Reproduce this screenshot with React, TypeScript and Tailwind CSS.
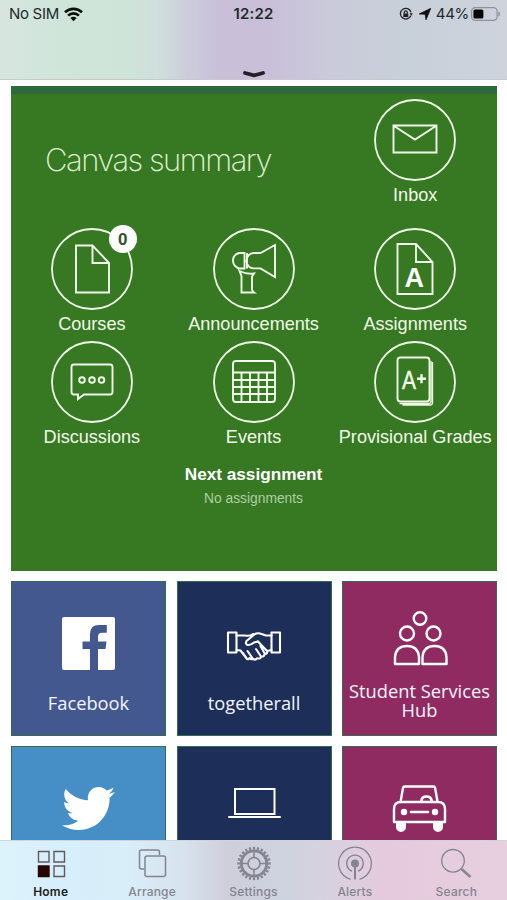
import React from "react";
import { FaTwitter } from "react-icons/fa";

type IconProps = { children: React.ReactNode };

function Circle({ children }: IconProps) {
  return (
    <svg width="82" height="82" viewBox="0 0 82 82" fill="none" stroke="#f1fbe9" strokeWidth="1.9" className="block">
      <circle cx="41" cy="41" r="40" strokeWidth="1.8" />
      {children}
    </svg>
  );
}

function Shortcut({ label, badge, children }: { label: string; badge?: string; children: React.ReactNode }) {
  return (
    <div className="flex w-[161.700px] shrink-0 flex-col items-center">
      <div className="relative">
        <Circle>{children}</Circle>
        {badge && (
          <span className="absolute -top-[3px] left-[58px] flex h-[28px] w-[28px] items-center justify-center rounded-full bg-white text-[17px] leading-none font-bold text-[#36502c]">
            {badge}
          </span>
        )}
      </div>
      <span className="mt-[4px] text-[18.100px] leading-[21px] whitespace-nowrap text-[#f1fbe9]">{label}</span>
    </div>
  );
}

function Tile({ color, label, children }: { color: string; label?: string; children: React.ReactNode }) {
  return (
    <div className={`flex h-[155px] w-[155px] flex-col items-center border border-[#356b50] ${color}`}>
      {children}
      {label && (
        <span className="flex h-[38px] w-[150px] items-center justify-center text-center font-['Open_Sans',sans-serif] text-[18.3px] leading-[19px] text-[#f5f5ff]">
          {label}
        </span>
      )}
    </div>
  );
}

function TileIcon({ children }: IconProps) {
  return (
    <svg width="60" height="101" viewBox="0 0 60 101" fill="none" stroke="#fff" strokeWidth="2.4" strokeLinejoin="round" strokeLinecap="round" className="block shrink-0">
      {children}
    </svg>
  );
}

function Tab({ label, active, children }: { label: string; active?: boolean; children: React.ReactNode }) {
  return (
    <div className={`flex flex-1 flex-col items-center ${active ? "text-[#241c20]" : "text-[#858490]"}`}>
      <svg width="40" height="42" viewBox="0 0 40 42" fill="none" stroke="currentColor" strokeWidth="1.5" className="block">
        {children}
      </svg>
      <span className={`text-[12px] leading-[13px] tracking-[0.200px] ${active ? "font-semibold" : "font-medium"}`}>{label}</span>
    </div>
  );
}

const teeth = Array.from({ length: 24 }, (_, i) => i * 15);

export default function App() {
  return (
    <div className="flex h-[900px] w-[507px] flex-col overflow-hidden bg-white font-['Liberation_Sans',Arial,sans-serif]">
      <header className="flex h-[80px] shrink-0 flex-col justify-between border-b border-[#c6c9cf] bg-[linear-gradient(90deg,#d6e6df_0%,#cfe5da_12%,#cee4d9_25%,#cfdfdb_31%,#cccddc_37%,#c9bfd9_43%,#c9bfd9_53%,#cacada_65%,#c8d0d9_80%,#ced3dc_100%)]">
        <div className="grid h-[28px] grid-cols-3 items-center font-[Inter,sans-serif] text-[15px] text-[#222a2b]">
          <div className="flex items-center gap-[5px] pl-[9px]">
            <span className="tracking-[-0.300px]">No SIM</span>
            <svg width="19" height="15" viewBox="0 0 19 15" fill="none" stroke="#0b0f0e" strokeWidth="2.7">
              <path d="M1 5.3a12.2 12.2 0 0 1 17 0" />
              <path d="M4.1 8.6a7.8 7.8 0 0 1 10.8 0" />
              <path d="M6.4 11.1a4.4 4.4 0 0 1 6.2 0L9.5 14.300z" fill="#0b0f0e" stroke="none" />
            </svg>
          </div>
          <span className="text-center text-[15px] font-semibold tracking-[0.200px]">12:22</span>
          <div className="flex items-center justify-end pr-[6px]">
            <svg width="14" height="14" viewBox="0 0 14 14" fill="none" stroke="#222" strokeWidth="1.3" className="mr-[6px]">
              <path d="M11.8 8.8A5.4 5.4 0 1 1 12 5.2" />
              <path d="m10.6 6.2 3.2 0-1.6 2.8z" fill="#222" stroke="none" />
              <rect x="4.3" y="6.4" width="5" height="3.7" fill="#222" stroke="none" />
              <path d="M5.3 6.5V5.4a1.5 1.5 0 0 1 3 0v1.1" />
            </svg>
            <svg width="12" height="12" viewBox="0 0 12 12" className="mr-[5px]">
              <path d="M11.800.3 7 11.800 6.200 6.200.2 6z" fill="#111" stroke="#111" strokeWidth=".8" strokeLinejoin="round" />
            </svg>
            <span className="text-[15px] tracking-[-0.300px]">44%</span>
            <svg width="30" height="14" viewBox="0 0 30 14" className="ml-[2px]">
              <rect x=".6" y=".6" width="25.5" height="12.8" rx="3.6" fill="none" stroke="#8f9396" strokeWidth="1.2" />
              <rect x="2.4" y="2.4" width="10" height="9.2" rx="1.6" fill="#050505" />
              <path d="M27.4 4.6c2.2.8 2.2 4 0 4.8z" fill="#8f9396" />
            </svg>
          </div>
        </div>
        <svg width="24" height="9" viewBox="0 0 24 9" fill="none" stroke="#262129" strokeWidth="3.8" strokeLinecap="round" strokeLinejoin="round" className="self-center">
          <path d="M3 3 12 5.400 21 3" />
        </svg>
      </header>

      <main className="flex min-h-0 flex-1 flex-col overflow-hidden pt-[6px] pr-[10px] pl-[11px]">
        <section className="h-[485px] shrink-0 border-t-8 border-t-[#2d693c] bg-[#377823]">
          <div className="flex h-[134px] pt-[5px]">
            <h1 className="w-[323.400px] shrink-0 pt-[45px] pl-[34px] font-[Inter,sans-serif] text-[31px] leading-[32px] font-extralight tracking-[-1.500px] whitespace-nowrap text-[#e2f3d6]">
              Canvas summary
            </h1>
            <Shortcut label="Inbox">
              <path d="M19.5 26.5h43v27h-43zM20 27l21 13.5L62 27" />
            </Shortcut>
          </div>
          <div className="flex h-[113px]">
            <Shortcut label="Courses" badge="0">
              <path d="M25 17.5h16.5L58 35v29.5H25zM41.5 18v17H58" />
            </Shortcut>
            <Shortcut label="Announcements">
              <path d="M31.500 25h-5.500q-6 2-6 7.500t6 8h5.500zM34 25v15.500M47.500 25h-7a7 7.700 0 0 0 0 15.400h7L62 49V17zM26.500 43q7 3.500 14.500 2.500l-2 3v13q.5 2 2 3H28.500V48z" />
            </Shortcut>
            <Shortcut label="Assignments">
              <path d="M23.5 16H42l16.5 18v32h-35zM42 16.500v17.500h16.500" />
              <text x="40.300" y="58.500" textAnchor="middle" fill="#fff" stroke="none" fontSize="27" fontWeight="700">A</text>
            </Shortcut>
          </div>
          <div className="flex h-[113px]">
            <Shortcut label="Discussions">
              <path d="M23 23.500h36q2.500 0 2.500 2.500v25q0 2.500-2.500 2.500H33l-6 4.500v-4.500h-4q-2.500 0-2.500-2.500V26q0-2.500 2.500-2.500z" />
              <circle cx="31" cy="39" r="2.800" /><circle cx="41" cy="39" r="2.800" /><circle cx="50.500" cy="39" r="2.800" />
            </Shortcut>
            <Shortcut label="Events">
              <rect x="20" y="20" width="42" height="41" rx="3" />
              <path d="M20 31.500h42M20 39h42M20 46h42M20 53h42M28.500 31.500V61M37 31.500V61M45.500 31.500V61M54 31.500V61" />
            </Shortcut>
            <Shortcut label="Provisional Grades">
              <rect x="23.500" y="16.500" width="32" height="44" rx="3" />
              <path d="M57 20v40q0 2.500-2.500 2.500H25.500M58.500 21v40.500q0 2.500-2.500 2.500H28.500" strokeWidth="1.300" />
              <text x="28" y="48" fill="#f1fbe9" stroke="#f1fbe9" strokeWidth=".4" fontSize="25" textLength="14" lengthAdjust="spacingAndGlyphs">A</text>
              <path d="M43 37.800h9M47.500 33.300v9" strokeWidth="2.400" />
            </Shortcut>
          </div>
          <div className="flex flex-col items-center pt-[9px] pr-px">
            <h2 className="text-[17.200px] leading-[22px] font-bold text-white">Next assignment</h2>
            <p className="mt-[5px] text-[13.800px] leading-[18px] text-[#afcfa4]">No assignments</p>
          </div>
        </section>

        <section className="mt-[10px] grid shrink-0 grid-cols-[155px_155px_155px] gap-x-[10.500px] gap-y-[10.400px]">
          <Tile color="bg-[#43588f]" label="Facebook">
            <TileIcon>
              <path fillRule="evenodd" stroke="none" fill="#fff" d="M5 35h49q2 0 2 2v49q0 2-2 2H39V67h7.500l1-7.500H39v-5q0-3.800 4-3.800h4.800V43h-7.800q-9 0-9 9v7.500h-7.500V67H31v21H5q-2 0-2-2V37q0-2 2-2z" />
            </TileIcon>
          </Tile>
          <Tile color="bg-[#1d2f59]" label="togetherall">
            <TileIcon>
              <g strokeWidth="2.100">
                <path d="M4 50.500h8.500v20H4zM47.500 50.500H56v20h-8.500z" />
                <path d="M12.500 53.500H21q5 1 8-1.500M47.500 53.500H42l-6-2q-3-.8-5 .5l-8.500 7q-1.500 3 1 4 3 .5 6.500-2.500l4-1" />
                <path d="m34 59.500 9 9.500q1 3-2.500 3 0 3-3.500 2.500-.5 2.800-4 1.800-1.500 2.200-4 .7M12.500 68l4 .5 6.500 8.500q1.800.8 2.500-1 2 2 3.500.5M43 69l4.500-1M19 71l3.500 5M23.500 69l4.500 6.500M32 67l5 7.500M36.500 64l4.500 8" />
              </g>
            </TileIcon>
          </Tile>
          <Tile color="bg-[#902b61]">
            <TileIcon>
              <circle cx="30" cy="36.500" r="6.300" />
              <circle cx="17" cy="51.500" r="7" />
              <circle cx="43.500" cy="51.500" r="7" />
              <path d="M5 82v-7q1-11 12-11t12 11v7zM32.500 82v-7q1-11 12-11t12 11v7z" />
            </TileIcon>
            <span className="-mt-[2px] w-[150px] text-center font-['Open_Sans',sans-serif] text-[18.300px] leading-[19px] text-[#f5f5ff]">Student Services Hub</span>
          </Tile>
          <Tile color="bg-[#468fc6]">
            <FaTwitter className="mt-[35px] h-[53px] w-[53px] text-white" />
          </Tile>
          <Tile color="bg-[#1d2f59]">
            <TileIcon>
              <path d="M11 42h39.500v25H11z" strokeWidth="2" strokeLinejoin="miter" />
              <path d="M5 70h51" strokeWidth="2" />
            </TileIcon>
          </Tile>
          <Tile color="bg-[#902b61]">
            <TileIcon>
              <path d="m10.500 55 2.500-14q.3-1.500 1.800-1.500h28.500q1.500 0 1.800 1.500l2.500 14M4 75V62q0-7 7-7h37q7 0 7 7v13z" />
              <path d="M31.500 54q0-4.500 5-4.500t5 4.500M21 65h17" strokeWidth="2.700" />
              <circle cx="14" cy="65" r="3.200" fill="#fff" stroke="none" />
              <circle cx="45" cy="65" r="3.200" fill="#fff" stroke="none" />
              <path d="M6 75h10v5a5 5 0 0 1-10 0zM43 75h10v5a5 5 0 0 1-10 0z" fill="#fff" stroke="none" />
            </TileIcon>
          </Tile>
        </section>
      </main>

      <nav className="flex h-[60px] shrink-0 border-t border-[#cfd3da] bg-[linear-gradient(90deg,#def4fb_0%,#d7effc_10%,#d8eef9_25%,#d7e3ee_36%,#cfcedb_45%,#cdd3df_55%,#d5d2df_62%,#e4cadc_76%,#e8cfe0_100%)] pt-[2px] font-[Inter,sans-serif]">
        <Tab label="Home" active>
          <g stroke="#64585f" strokeWidth="1.400">
            <path d="M7.500 8.500H18V19H7.500zM23 8.500h10.500V19H23zM23 23h10.500v10.500H23z" />
            <path d="M7.500 23H18v10.500H7.500z" fill="#270604" stroke="#270604" />
          </g>
        </Tab>
        <Tab label="Arrange">
          <path d="M12 26H9.500Q7.500 26 7.500 24V9q0-2 2-2h16q2 0 2 2v3" />
          <rect x="13" y="13" width="20.500" height="20.500" rx="2" />
        </Tab>
        <Tab label="Settings">
          {teeth.map((angle) => (
            <path key={angle} d="M20 6.500V3.800" strokeWidth="2.200" transform={`rotate(${angle} 20 20.500)`} />
          ))}
          <circle cx="20" cy="20.500" r="12.700" strokeWidth="2.800" />
          <circle cx="20" cy="20.500" r="6" strokeWidth="1.700" />
          <path d="M20 8v6.500M20 26.500V33M7.500 20.500H14M26 20.500h6.500" strokeWidth="1.600" />
        </Tab>
        <Tab label="Alerts">
          <path d="M15.500 36.300a16.400 16.400 0 1 1 9 0M17 28.200a8.300 8.300 0 1 1 6 0" strokeWidth="1.300" />
          <circle cx="20" cy="20.500" r="4" fill="currentColor" stroke="none" />
          <path d="M20 21v15.500" strokeWidth="2" />
        </Tab>
        <Tab label="Search">
          <circle cx="17" cy="17.800" r="11.300" strokeWidth="1.300" />
          <path d="m25.500 26 9 8" strokeWidth="2.400" />
        </Tab>
      </nav>
    </div>
  );
}
